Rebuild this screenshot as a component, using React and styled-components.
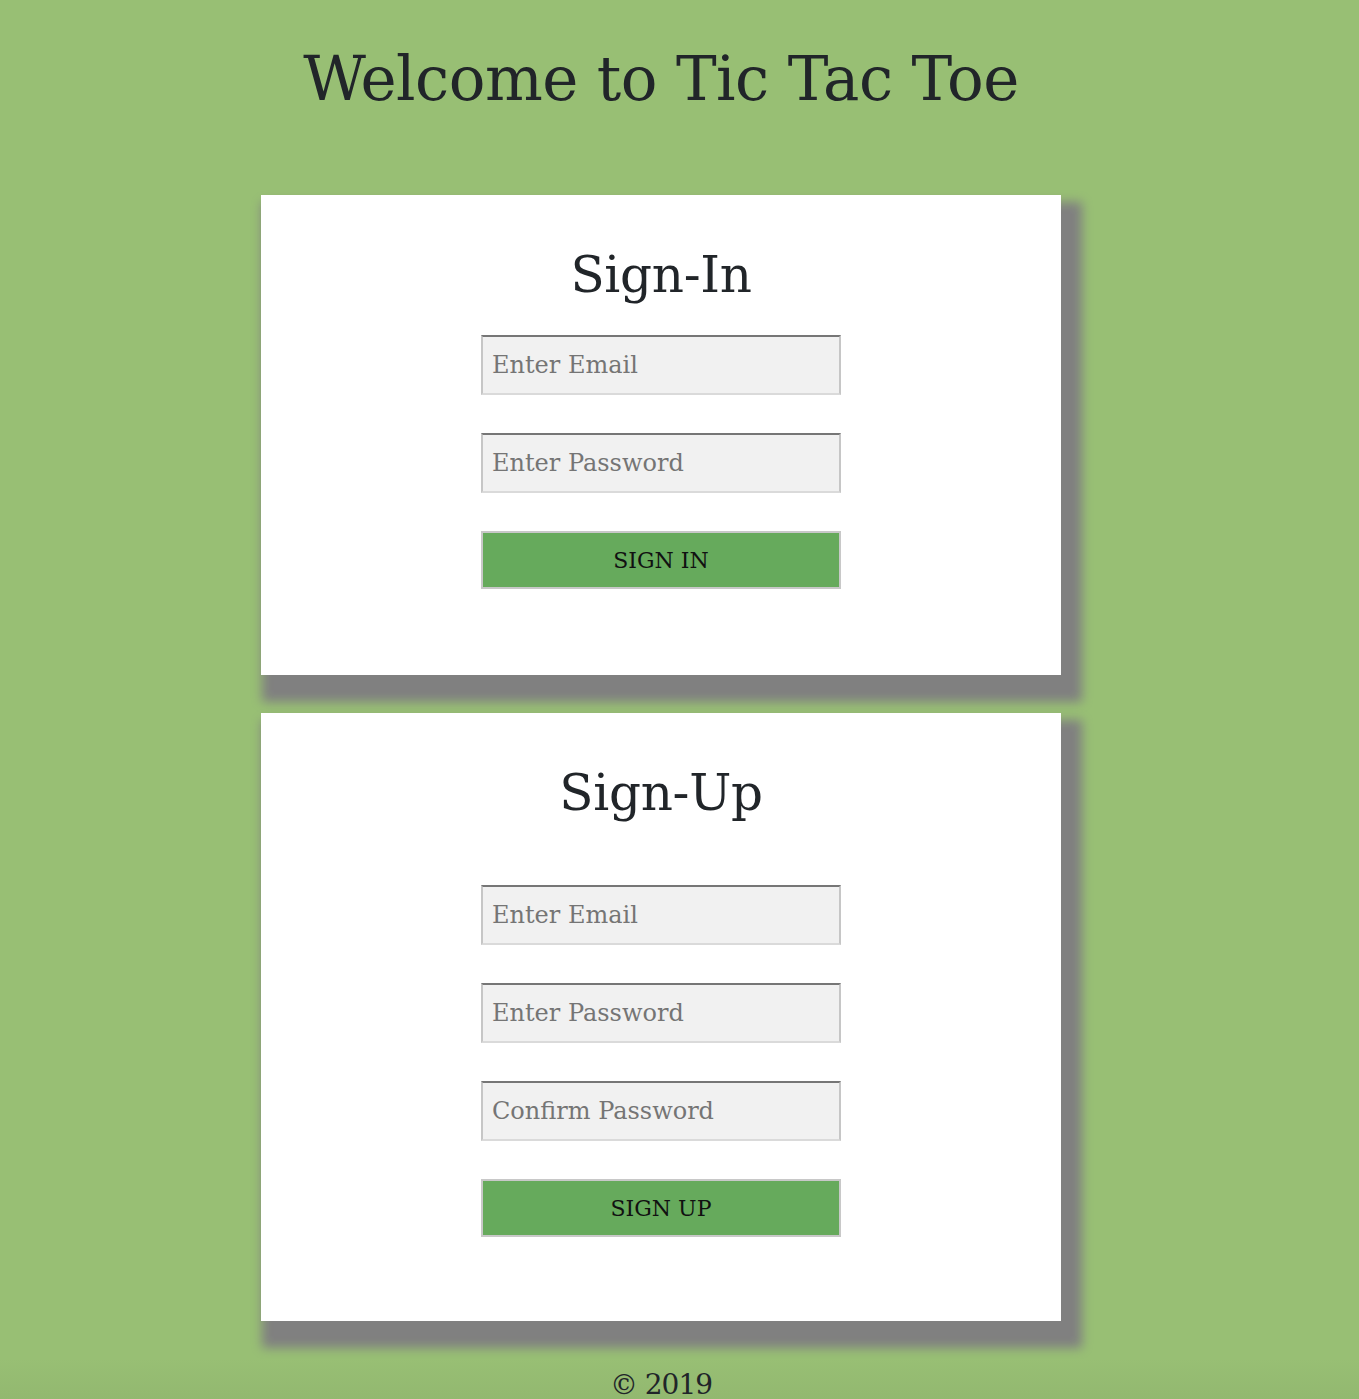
import React from "react";
import styled, { createGlobalStyle } from "styled-components";

const Global = createGlobalStyle`
  html, body { margin: 0; padding: 0; }
  body {
    background: #98bf74;
    font-family: "DejaVu Serif", "Liberation Serif", serif;
    color: #212529;
  }
  * { box-sizing: border-box; }
`;

const Page = styled.div`
  display: flex;
  flex-direction: column;
  align-items: center;
  padding: 39px 37px 0 0;
`;

const Title = styled.h1`
  margin: 0 0 76px;
  font-size: 61px;
  font-weight: 400;
  line-height: 80px;
  letter-spacing: -0.5px;
`;

const Card = styled.section`
  width: 800px;
  background: #fff;
  box-shadow: 11px 17px 10px 10px #808080;
  display: flex;
  flex-direction: column;
  align-items: center;
  padding: 48px 0 ${(p) => p.$bottom}px;
  margin-bottom: 38px;
`;

const CardTitle = styled.h2`
  margin: 0 0 ${(p) => p.$gap}px;
  font-size: 50px;
  font-weight: 400;
  line-height: 64px;
  letter-spacing: -0.3px;
`;

const Form = styled.form`
  display: flex;
  flex-direction: column;
  gap: 38px;
  width: 360px;
`;

const Input = styled.input`
  width: 360px;
  height: 60px;
  margin: 0;
  padding: 0 9px;
  background: #f1f1f1;
  border: 2px solid;
  border-color: #767676 #c6c6c6 #dadada #c6c6c6;
  font-family: inherit;
  font-size: 24px;
  color: #333;
  outline: none;
  &::placeholder { color: #757575; }
`;

const Button = styled.button`
  width: 360px;
  height: 58px;
  margin: 0;
  padding: 0;
  background: #66aa5c;
  border: 2px solid #c8c8c8;
  font-family: inherit;
  font-size: 22px;
  color: #111;
  text-transform: uppercase;
  cursor: pointer;
`;

const Footer = styled.footer`
  align-self: stretch;
  margin-right: -37px;
  display: flex;
  justify-content: center;
  padding: 8px 37px 20px 0;
  background: linear-gradient(#98bf74, #8fb46d);
  font-size: 28px;
  line-height: 36px;
  letter-spacing: -1px;
`;

export default function App() {
  return (
    <>
      <Global />
      <Page>
        <Title>Welcome to Tic Tac Toe</Title>
        <Card $bottom={86}>
          <CardTitle $gap={28}>Sign-In</CardTitle>
          <Form onSubmit={(e) => e.preventDefault()}>
            <Input type="email" placeholder="Enter Email" />
            <Input type="password" placeholder="Enter Password" />
            <Button type="submit">Sign In</Button>
          </Form>
        </Card>
        <Card $bottom={84}>
          <CardTitle $gap={60}>Sign-Up</CardTitle>
          <Form onSubmit={(e) => e.preventDefault()}>
            <Input type="email" placeholder="Enter Email" />
            <Input type="password" placeholder="Enter Password" />
            <Input type="password" placeholder="Confirm Password" />
            <Button type="submit">Sign Up</Button>
          </Form>
        </Card>
        <Footer>© 2019</Footer>
      </Page>
    </>
  );
}
